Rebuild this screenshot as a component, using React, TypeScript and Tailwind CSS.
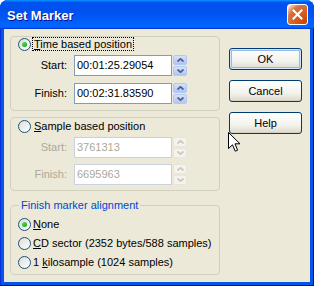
import type { ReactNode } from 'react'

function Radio({ checked, disabled }: { checked?: boolean; disabled?: boolean }) {
  return (
    <span
      className={`relative inline-flex h-[13px] w-[13px] shrink-0 items-center justify-center rounded-full border ${
        disabled ? 'border-[#cac8bb] bg-white' : 'border-[#1c5180] bg-[linear-gradient(135deg,#dcdcd7,#ffffff)]'
      }`}
    >
      {checked && (
        <span className="h-[5px] w-[5px] rounded-full bg-[radial-gradient(circle_at_30%_30%,#55d551,#09a709)]" />
      )}
    </span>
  )
}

function Arrow({ up, disabled }: { up?: boolean; disabled?: boolean }) {
  return (
    <svg width="7" height="4" viewBox="0 0 7 4">
      <path
        d={up ? 'M0.5 3.5 L3.5 0.8 L6.5 3.5' : 'M0.5 0.5 L3.5 3.2 L6.5 0.5'}
        fill="none"
        stroke={disabled ? '#cac8bb' : '#4d6185'}
        strokeWidth="1.7"
      />
    </svg>
  )
}

function Spin({ disabled }: { disabled?: boolean }) {
  const half = disabled
    ? 'border-[#e8e6dc] bg-[#f4f3ee]'
    : 'border-[#b4c8f6] bg-[linear-gradient(180deg,#d5e1fb,#b0c4f3)]'
  return (
    <div className="ml-[1px] flex h-[21px] w-[14px] flex-col gap-[1px]">
      <div className={`flex h-[10px] items-center justify-center rounded-[2px] border ${half}`}>
        <Arrow up disabled={disabled} />
      </div>
      <div className={`flex h-[10px] items-center justify-center rounded-[2px] border ${half}`}>
        <Arrow disabled={disabled} />
      </div>
    </div>
  )
}

function Field({ label, value, disabled }: { label: string; value: string; disabled?: boolean }) {
  return (
    <div className="flex items-center">
      <span className={`w-[49px] text-right ${disabled ? 'text-[#aca899]' : 'text-black'}`}>{label}</span>
      <div
        className={`ml-[7px] flex h-[21px] w-[98px] items-center border bg-white pl-[2px] ${
          disabled ? 'border-[#c9d2dc] text-[#aca899]' : 'border-[#7f9db9] text-black'
        }`}
      >
        {value}
      </div>
      <Spin disabled={disabled} />
    </div>
  )
}

function XpButton({ children, isDefault }: { children: ReactNode; isDefault?: boolean }) {
  return (
    <button
      className={`h-[22px] w-[73px] rounded-[3px] border border-[#003c74] bg-[linear-gradient(180deg,#ffffff,#f3f2ed_60%,#dcd8cc)] text-[11px] text-black ${
        isDefault ? 'shadow-[inset_0_0_0_1px_#cee7ff,inset_0_0_0_2px_#98b8ea]' : 'shadow-[inset_0_-1px_#d6d0c5]'
      }`}
    >
      {children}
    </button>
  )
}

export default function App() {
  return (
    <div className="relative flex h-[286px] w-[314px] flex-col overflow-hidden rounded-t-[8px] bg-[#0655e6] font-['Liberation_Sans',Arial,sans-serif] text-[11px] leading-[13px] shadow-[inset_-1px_-1px_#00138c,inset_1px_0_#0831d9]">
      {/* Title bar */}
      <div className="flex h-[29px] shrink-0 items-center justify-between bg-[linear-gradient(180deg,#0997ff,#0053ee_8%,#0050ee_40%,#06f_88%,#06f_93%,#005bff_95%,#003dd7_96%,#003dd7)] pl-[7px] pr-[6px]">
        <span className="pt-[2px] text-[13px] font-bold text-white [text-shadow:1px_1px_0_#0f1089]">Set Marker</span>
        <div className="flex h-[21px] w-[21px] items-center justify-center rounded-[3px] border border-white bg-[radial-gradient(circle_at_90%_90%,#cc4600_0%,#dc6527_55%,#cd7546_70%,#ffccb2_90%,#fff_100%)]">
          <svg width="11" height="11" viewBox="0 0 11 11">
            <path d="M1.5 1.5 L9.5 9.5 M9.5 1.5 L1.5 9.5" stroke="white" strokeWidth="2" strokeLinecap="square" />
          </svg>
        </div>
      </div>

      {/* Client area */}
      <div className="mx-[4px] mb-[4px] flex flex-1 bg-[#ece9d8] pl-[6px] pt-[7px]">
        <div className="flex w-[210px] flex-col">
          {/* Time based */}
          <div className="h-[75px] rounded-[4px] border border-[#d0d0bf] pl-[7px]">
            <div className="flex h-[14px] items-center gap-[1px]">
              <Radio checked />
              <span className="border border-dotted border-black px-[1px] leading-[12px]">
                <u>T</u>ime based position
              </span>
            </div>
            <div className="mt-[4px] flex flex-col gap-[7px]">
              <Field label="Start:" value="00:01:25.29054" />
              <Field label="Finish:" value="00:02:31.83590" />
            </div>
          </div>

          {/* Sample based */}
          <div className="mt-[6px] h-[74px] rounded-[4px] border border-[#d0d0bf] pl-[7px] pt-[1px]">
            <div className="flex h-[14px] items-center gap-[2px]">
              <Radio />
              <span className="px-[1px]">
                <u>S</u>ample based position
              </span>
            </div>
            <div className="mt-[4px] flex flex-col gap-[6px]">
              <Field label="Start:" value="3761313" disabled />
              <Field label="Finish:" value="6695963" disabled />
            </div>
          </div>

          {/* Alignment */}
          <fieldset className="mt-[8px] rounded-[4px] border border-[#d0d0bf] pb-[5px] pl-[7px] pt-[6px]">
            <legend className="ml-[1px] px-[2px] leading-[13px] text-[#0046d5]">Finish marker alignment</legend>
            <div className="flex flex-col gap-[6px]">
              <div className="flex h-[13px] items-center gap-[2px]">
                <Radio checked />
                <span>
                  <u>N</u>one
                </span>
              </div>
              <div className="flex h-[13px] items-center gap-[2px]">
                <Radio />
                <span>
                  <u>C</u>D sector (2352 bytes/588 samples)
                </span>
              </div>
              <div className="flex h-[13px] items-center gap-[2px]">
                <Radio />
                <span>
                  1 <u>k</u>ilosample (1024 samples)
                </span>
              </div>
            </div>
          </fieldset>
        </div>

        {/* Buttons */}
        <div className="ml-[9px] mt-[12px] flex flex-col gap-[10px]">
          <XpButton isDefault>OK</XpButton>
          <XpButton>Cancel</XpButton>
          <XpButton>Help</XpButton>
        </div>
      </div>

      {/* Mouse pointer */}
      <svg className="absolute left-[228px] top-[132px]" width="13" height="21" viewBox="0 0 13 21">
        <path
          d="M0.5 0.5 L0.5 16.5 L4.5 12.8 L7.2 19.2 L9.6 18.2 L7 11.8 L12 11.8 Z"
          fill="white"
          stroke="black"
          strokeWidth="1"
          strokeLinejoin="miter"
        />
      </svg>
    </div>
  )
}
